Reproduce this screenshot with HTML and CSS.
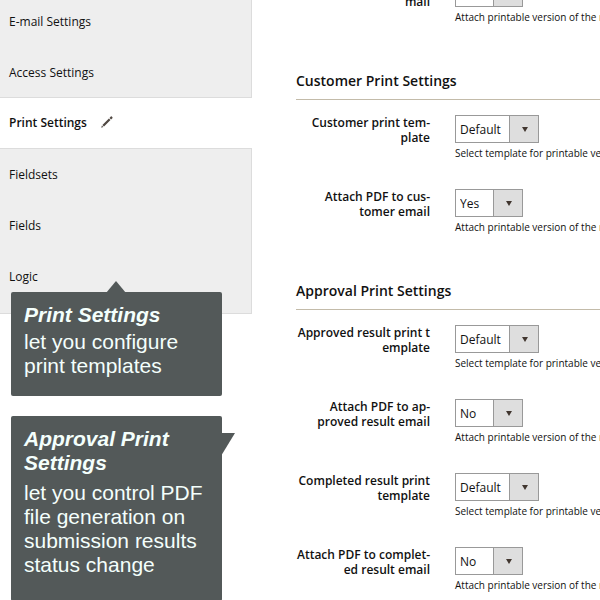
FILE: index.html
```
<!DOCTYPE html>
<html lang="en">
<head>
    <meta charset="UTF-8">
    <meta name="viewport" content="width=device-width, initial-scale=1.0">
    <title>Print Settings</title>
    <link rel="stylesheet" href="styles.css">
</head>
<body>
    <div class="page">
        <nav class="sidebar">
            <div class="nav-group nav-group-top">
                <a href="#email">E-mail Settings</a>
                <a href="#access">Access Settings</a>
            </div>
            <a class="active" href="#print">
                Print Settings
                <svg width="12" height="12" viewBox="0 0 12 12" fill="#514943">
                    <path d="M0.2 11.8L0.9 9.6L2.4 11.1zM1.4 9L7.9 2.5L9.5 4.1L3 10.6zM8.5 1.9L9.8 0.6Q10.3 0.1 10.8 0.6L11.4 1.2Q11.9 1.7 11.4 2.2L10.1 3.5z"/>
                </svg>
            </a>
            <div class="nav-group nav-group-bottom">
                <a href="#fieldsets">Fieldsets</a>
                <a href="#fields">Fields</a>
                <a href="#logic">Logic</a>
            </div>
        </nav>

        <main class="content">
            <section>
                <div class="field">
                    <label for="attach-admin">Attach PDF to admin e-<br>mail</label>
                    <div class="control">
                        <div class="select-box"><select id="attach-admin"><option>No</option></select></div>
                        <p class="note">Attach printable version of the result to email</p>
                    </div>
                </div>
            </section>

            <section>
                <h2>Customer Print Settings</h2>
                <div class="field">
                    <label for="customer-template">Customer print tem-<br>plate</label>
                    <div class="control">
                        <div class="select-box wide"><select id="customer-template"><option>Default</option></select></div>
                        <p class="note">Select template for printable version</p>
                    </div>
                </div>
                <div class="field">
                    <label for="attach-customer">Attach PDF to cus-<br>tomer email</label>
                    <div class="control">
                        <div class="select-box"><select id="attach-customer"><option>Yes</option></select></div>
                        <p class="note">Attach printable version of the result to email</p>
                    </div>
                </div>
            </section>

            <section>
                <h2>Approval Print Settings</h2>
                <div class="field">
                    <label for="approved-template">Approved result print t<br>emplate</label>
                    <div class="control">
                        <div class="select-box wide"><select id="approved-template"><option>Default</option></select></div>
                        <p class="note">Select template for printable version</p>
                    </div>
                </div>
                <div class="field">
                    <label for="attach-approved">Attach PDF to ap-<br>proved result email</label>
                    <div class="control">
                        <div class="select-box"><select id="attach-approved"><option>No</option></select></div>
                        <p class="note">Attach printable version of the result to email</p>
                    </div>
                </div>
                <div class="field">
                    <label for="completed-template">Completed result print<br>template</label>
                    <div class="control">
                        <div class="select-box wide"><select id="completed-template"><option>Default</option></select></div>
                        <p class="note">Select template for printable version</p>
                    </div>
                </div>
                <div class="field">
                    <label for="attach-completed">Attach PDF to complet-<br>ed result email</label>
                    <div class="control">
                        <div class="select-box"><select id="attach-completed"><option>No</option></select></div>
                        <p class="note">Attach printable version of the result to email</p>
                    </div>
                </div>
            </section>
        </main>

        <aside class="callout callout-print">
            <h3>Print Settings</h3>
            <p>let you configure<br>print templates</p>
        </aside>
        <aside class="callout callout-approval">
            <h3>Approval Print<br>Settings</h3>
            <p>let you control PDF<br>file generation on<br>submission results<br>status change</p>
        </aside>
    </div>
</body>
</html>
```
FILE: styles.css
```
* {
    box-sizing: border-box;
}

body {
    margin: 0;
    font-family: "Open Sans", "Noto Sans", sans-serif;
    font-size: 12px;
    color: #111;
    background-color: #fff;
}

h2, h3, p {
    margin: 0;
}

.page {
    position: relative;
    display: flex;
    height: 100vh;
    overflow: hidden;
}

/* Sidebar */
.sidebar {
    flex: 0 0 252px;
}

.sidebar a {
    display: flex;
    align-items: center;
    height: 51px;
    padding-left: 9px;
    color: #111;
    text-decoration: none;
}

.sidebar a.active {
    height: 50px;
    padding-bottom: 2px;
    gap: 14px;
    font-weight: 600;
}

.nav-group {
    background-color: #eee;
    border: 1px solid #dcdcdc;
    border-left: none;
}

.nav-group-top {
    margin-top: -6px;
}

.nav-group-top a {
    padding-top: 2px;
}

.nav-group-bottom {
    padding-bottom: 11px;
}

/* Settings form */
.content {
    flex: 1;
    min-width: 0;
    margin-top: -20px;
    padding-left: 44px;
}

h2 {
    margin: 15px 0;
    padding-bottom: 6px;
    border-bottom: 1px solid #c3bba9;
    font-size: 14px;
    line-height: 25px;
    font-weight: 600;
}

section:first-child {
    margin-top: -1px;
}

.field {
    display: flex;
    gap: 25px;
    height: 74px;
}

.field label {
    flex: 0 0 134px;
    line-height: 15px;
    font-weight: 600;
    text-align: right;
    white-space: nowrap;
}

.control {
    flex: 1;
    min-width: 0;
}

.select-box {
    position: relative;
    width: 68px;
    height: 28px;
}

.select-box.wide {
    width: 84px;
}

.select-box select {
    appearance: none;
    width: 100%;
    height: 100%;
    padding: 0 4px;
    border: 1px solid #999;
    border-radius: 0;
    background: linear-gradient(to left, #dedede 28px, #999 28px, #999 29px, #fff 29px);
    font-family: inherit;
    font-size: 12px;
    color: #111;
}

.select-box::after {
    content: "";
    position: absolute;
    right: 11px;
    top: 12px;
    border: 3px solid transparent;
    border-top: 5px solid #41362f;
    border-bottom: none;
    pointer-events: none;
}

.note {
    margin-top: 2px;
    font-size: 10px;
    line-height: 16px;
    white-space: nowrap;
}

/* Callouts over the page */
.callout {
    position: absolute;
    left: 11px;
    width: 211px;
    padding: 11px 13px 18px;
    border-radius: 2px;
    background-color: #535959;
    color: #f4fffc;
    font-family: "Liberation Sans", Arial, sans-serif;
    font-size: 21px;
    line-height: 24px;
    white-space: nowrap;
}

.callout h3 {
    margin-bottom: 3px;
    font-size: 21px;
    font-style: italic;
    font-weight: bold;
}

.callout::before {
    content: "";
    position: absolute;
    background-color: #535959;
}

.callout-print {
    top: 292px;
}

.callout-print::before {
    left: 95px;
    top: -11px;
    width: 20px;
    height: 12px;
    clip-path: polygon(50% 0, 100% 100%, 0 100%);
}

.callout-approval {
    top: 416px;
    padding-bottom: 24px;
}

.callout-approval h3 {
    margin-bottom: 6px;
}

.callout-approval::before {
    left: 210px;
    top: 17px;
    width: 14px;
    height: 23px;
    clip-path: polygon(0 0, 100% 0, 0 100%);
}
```
